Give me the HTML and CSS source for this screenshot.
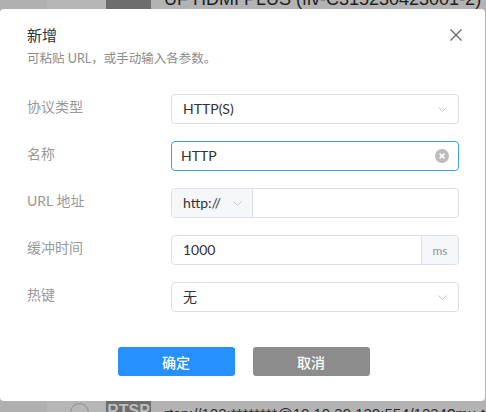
FILE: index.html
```html
<!DOCTYPE html>
<html lang="zh">
<head>
<meta charset="utf-8">
<title>新增</title>
<link rel="stylesheet" href="styles.css">
</head>
<body>
<div class="backdrop">
  <div class="bg-row bg-top">
    <div class="c1"></div>
    <div class="c2"></div>
    <div class="c3"></div>
    <div class="c4"><span class="bg-title">UF HDMI PLUS (flv-C315230423001-2)</span></div>
  </div>
  <div class="bg-spacer"></div>
  <div class="bg-row bg-bottom">
    <div class="c1"></div>
    <div class="c2"><span class="radio"></span></div>
    <div class="c3"><span class="tag">RTSP</span></div>
    <div class="c4"><span class="bg-url">rtsp://123:********@10.10.39.130:554/1234?mu-tcp-first</span></div>
  </div>
</div>

<div class="modal">
  <div class="modal-head">
    <div class="modal-title">新增</div>
    <button class="close" aria-label="关闭">
      <svg width="12" height="12" viewBox="0 0 12 12"><path d="M0.5 0.5L11.5 11.5M11.5 0.5L0.5 11.5" stroke="#666" stroke-width="1.3" fill="none"/></svg>
    </button>
  </div>
  <div class="modal-sub">可粘贴 URL，或手动输入各参数。</div>

  <div class="form">
    <div class="row">
      <div class="label">协议类型</div>
      <div class="field select">
        <span class="val">HTTP(S)</span>
        <svg class="chev" width="9" height="5" viewBox="0 0 9 5"><path d="M0.5 0.5L4.5 4.3L8.5 0.5" stroke="#c0c4cc" stroke-width="1" fill="none"/></svg>
      </div>
    </div>
    <div class="row">
      <div class="label">名称</div>
      <div class="field focus">
        <span class="val val-name">HTTP</span>
        <span class="clear">
          <svg width="14" height="14" viewBox="0 0 14 14"><circle cx="7" cy="7" r="7" fill="#bcbcbc"/><path d="M4.6 4.6L9.4 9.4M9.4 4.6L4.6 9.4" stroke="#fff" stroke-width="1.6" fill="none"/></svg>
        </span>
      </div>
    </div>
    <div class="row">
      <div class="label">URL 地址</div>
      <div class="field group">
        <div class="prefix">
          <span class="val">http://</span>
          <svg class="chev" width="9" height="5" viewBox="0 0 9 5"><path d="M0.5 0.5L4.5 4.3L8.5 0.5" stroke="#c0c4cc" stroke-width="1" fill="none"/></svg>
        </div>
        <div class="grow"></div>
      </div>
    </div>
    <div class="row">
      <div class="label">缓冲时间</div>
      <div class="field group">
        <div class="grow"><span class="val">1000</span></div>
        <div class="suffix">ms</div>
      </div>
    </div>
    <div class="row">
      <div class="label">热键</div>
      <div class="field select">
        <span class="val">无</span>
        <svg class="chev" width="9" height="5" viewBox="0 0 9 5"><path d="M0.5 0.5L4.5 4.3L8.5 0.5" stroke="#c0c4cc" stroke-width="1" fill="none"/></svg>
      </div>
    </div>
  </div>

  <div class="actions">
    <button class="btn btn-primary">确定</button>
    <button class="btn btn-cancel">取消</button>
  </div>
</div>
</body>
</html>
```

FILE: styles.css
```css
* { box-sizing: border-box; }
html, body { margin: 0; padding: 0; }
html { overflow: hidden; }
body {
  width: 486px;
  height: 412px;
  overflow: hidden;
  position: relative;
  font-family: Lato, "Noto Sans CJK SC", sans-serif;
  background: #b3b3b3;
}

.backdrop {
  display: flex;
  flex-direction: column;
  height: 412px;
  overflow: hidden;
}
.bg-row {
  display: flex;
  height: 30px;
  flex: none;
}
.bg-top { margin-top: -20px; }
.bg-spacer { flex: 1; }
.bg-bottom { margin-bottom: -19px; }
.c1 { width: 47px; background: #b0b0b0; }
.c2 { width: 59px; background: #b6b6b6; position: relative; }
.c3 { width: 45px; background: #6d6d6d; display: flex; justify-content: center; }
.c4 { flex: 1; background: #b3b3b3; padding-left: 13px; overflow: hidden; white-space: nowrap; }
.bg-title {
  display: block;
  font-family: "Liberation Sans", Arial, sans-serif;
  font-size: 18px;
  color: #1e1e1e;
  line-height: 20px;
  padding-top: 9px;
}
.radio {
  position: absolute;
  left: 23px;
  top: 2px;
  width: 19px;
  height: 19px;
  border: 1px solid #8e8e8e;
  border-radius: 50%;
}
.tag {
  font-family: "Liberation Sans", Arial, sans-serif;
  font-weight: bold;
  font-size: 16px;
  color: #bdbdbd;
  line-height: 20px;
}
.bg-url {
  display: block;
  font-family: "Liberation Sans", Arial, sans-serif;
  font-size: 15px;
  color: #2a2a2a;
  line-height: 20px;
  padding-top: 3px;
}

.modal {
  position: absolute;
  left: 0;
  top: 9px;
  width: 485px;
  height: 392px;
  background: #fff;
  border-radius: 4px;
  padding: 15px 26px 25px 27px;
  display: flex;
  flex-direction: column;
}
.modal-head {
  display: flex;
  justify-content: space-between;
  align-items: center;
  height: 22px;
}
.modal-title {
  font-size: 15px;
  color: #303133;
  line-height: 22px;
}
.close {
  border: 0;
  background: none;
  padding: 0;
  margin-right: -3px;
  width: 12px;
  height: 12px;
  display: flex;
}
.modal-sub {
  margin-top: 4px;
  font-size: 12.5px;
  line-height: 18px;
  color: #8c8c8c;
}

.form {
  margin-top: 26px;
  display: flex;
  flex-direction: column;
  gap: 17px;
}
.row {
  display: flex;
  align-items: flex-start;
}
.label {
  width: 144px;
  flex: none;
  font-size: 14px;
  line-height: 26px;
  color: #999;
}
.field {
  flex: 1;
  height: 30px;
  border: 1px solid #dcdfe6;
  border-radius: 4px;
  display: flex;
  align-items: center;
  font-size: 14px;
  color: #333;
}
.val { padding-left: 11px; line-height: 28px; }
.select { justify-content: space-between; padding-right: 11px; }
.chev { display: block; }
.focus { border-color: #409eff; justify-content: space-between; padding-right: 9px; }
.val-name { padding-left: 9px; }
.clear { display: flex; }
.group { overflow: hidden; align-items: stretch; }
.prefix {
  width: 81px;
  background: #f5f7fa;
  border-right: 1px solid #dcdfe6;
  display: flex;
  align-items: center;
  justify-content: space-between;
  padding-right: 10px;
}
.grow { flex: 1; display: flex; align-items: center; }
.suffix {
  width: 37px;
  background: #f5f7fa;
  border-left: 1px solid #dcdfe6;
  font-size: 12px;
  color: #909399;
  display: flex;
  align-items: center;
  justify-content: center;
}

.actions {
  margin-top: auto;
  display: flex;
  justify-content: center;
  gap: 18px;
  padding-left: 1px;
}
.btn {
  width: 117px;
  height: 29px;
  border: 0;
  border-radius: 3px;
  color: #fff;
  font-family: Lato, "Noto Sans CJK SC", sans-serif;
  font-size: 14px;
  font-weight: 500;
}
.btn-primary { background: #2690fe; }
.btn-cancel { background: #8c8c8c; }
```
